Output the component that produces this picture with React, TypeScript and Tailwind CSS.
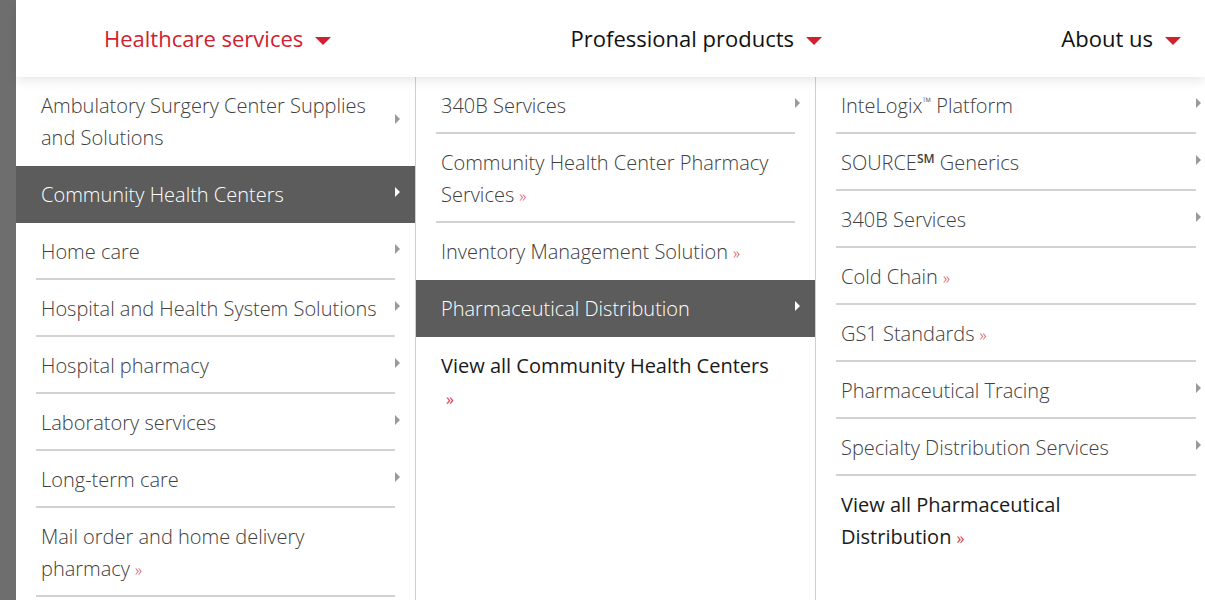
type Item = {
  label: React.ReactNode
  arrow?: boolean
  link?: boolean
  active?: boolean
  strong?: boolean
}

const col1: Item[] = [
  { label: 'Ambulatory Surgery Center Supplies and Solutions', arrow: true },
  { label: 'Community Health Centers', arrow: true, active: true },
  { label: 'Home care', arrow: true },
  { label: 'Hospital and Health System Solutions', arrow: true },
  { label: 'Hospital pharmacy', arrow: true },
  { label: 'Laboratory services', arrow: true },
  { label: 'Long-term care', arrow: true },
  { label: 'Mail order and home delivery pharmacy', link: true },
]

const col2: Item[] = [
  { label: '340B Services', arrow: true },
  { label: 'Community Health Center Pharmacy Services', link: true },
  { label: 'Inventory Management Solution', link: true },
  { label: 'Pharmaceutical Distribution', arrow: true, active: true },
  { label: 'View all Community Health Centers', link: true, strong: true },
]

const col3: Item[] = [
  {
    label: (
      <>
        InteLogix<span className="relative -top-[7px] inline-block text-[12px] leading-none">™</span> Platform
      </>
    ),
    arrow: true,
  },
  {
    label: (
      <>
        SOURCE<span className="relative -top-[7px] inline-block text-[12px] font-semibold leading-none">SM</span> Generics
      </>
    ),
    arrow: true,
  },
  { label: '340B Services', arrow: true },
  { label: 'Cold Chain', link: true },
  { label: 'GS1 Standards', link: true },
  { label: 'Pharmaceutical Tracing', arrow: true },
  { label: 'Specialty Distribution Services', arrow: true },
  { label: 'View all Pharmaceutical Distribution', link: true, strong: true },
]

function Caret() {
  return (
    <span className="ml-[12px] inline-block h-0 w-0 border-x-[8px] border-t-[8px] border-x-transparent border-t-[#d3202f] align-middle" />
  )
}

function MenuColumn({ items, last }: { items: Item[]; last?: boolean }) {
  return (
    <div className={`w-[400px] shrink-0 ${last ? '' : 'border-r border-[#cfcfcf]'}`}>
      {items.map((item, i) => {
        const next = items[i + 1]
        const showBorder = !item.active && !item.strong && !(next && next.active)
        return (
          <div key={i} className={`px-[20px] ${item.active ? 'bg-[#5c5c5c]' : ''}`}>
            <div
              className={`relative border-b-2 pt-[13px] pb-[10px] pl-[5px] ${
                showBorder ? 'border-[#d2d2d2]' : 'border-transparent'
              }`}
            >
              <div
                className={`text-[20px] leading-[32px] ${
                  item.active
                    ? 'max-w-[338px] font-light text-white'
                    : item.strong
                      ? 'max-w-[330px] font-normal text-[#1a1a1a]'
                      : 'max-w-[338px] font-light text-[#404040]'
                }`}
              >
                {item.label}
                {item.link && (
                  <span className="ml-[5px] inline-block text-[16px] leading-none text-[#d8394a]">»</span>
                )}
              </div>
              {item.arrow && (
                <span
                  className={`absolute right-[-5px] top-1/2 -translate-y-[70%] h-0 w-0 border-y-[5px] border-l-[5px] border-y-transparent ${
                    item.active ? 'border-l-white' : 'border-l-[#9a9a9a]'
                  }`}
                />
              )}
            </div>
          </div>
        )
      })}
    </div>
  )
}

export default function App() {
  return (
    <div
      className="flex h-[600px] w-[1205px] overflow-hidden bg-white"
      style={{ fontFamily: '"Open Sans", "Noto Sans", sans-serif' }}
    >
      <div className="w-[16px] shrink-0 bg-[#6e6e6e]" />
      <div className="flex min-w-0 flex-1 flex-col">
        <header className="relative z-10 flex h-[77px] shrink-0 items-center justify-between bg-white pl-[88px] pr-[24px] text-[22px] shadow-[0_4px_10px_rgba(0,0,0,0.09)]">
          <span className="text-[#d3202f]">
            Healthcare services
            <Caret />
          </span>
          <span className="text-[#111]">
            Professional products
            <Caret />
          </span>
          <span className="text-[#111]">
            About us
            <Caret />
          </span>
        </header>
        <div className="flex min-h-0 flex-1">
          <MenuColumn items={col1} />
          <MenuColumn items={col2} />
          <MenuColumn items={col3} last />
        </div>
      </div>
    </div>
  )
}
